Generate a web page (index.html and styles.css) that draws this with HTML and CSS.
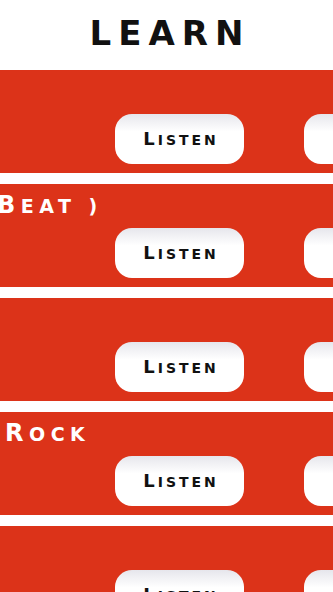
FILE: index.html
```html
<!DOCTYPE html>
<html lang="en">

<head>
    <meta charset="UTF-8">
    <meta name="viewport" content="width=device-width, initial-scale=1.0">
    <title>Learn</title>
    <link rel="stylesheet" href="styles.css">
</head>

<body>
    <header class="header">
        <h1 class="header-title">Learn</h1>
    </header>

    <div class="lessons">
        <div class="lesson">
            <div class="lesson-title"></div>
            <div class="lesson-actions">
                <button class="lesson-button"><span class="label">Listen</span></button>
                <button class="lesson-button"><span class="label">Learn</span></button>
            </div>
        </div>

        <div class="lesson">
            <div class="lesson-title lesson-title-clipped"><span class="label">Beat )</span></div>
            <div class="lesson-actions">
                <button class="lesson-button"><span class="label">Listen</span></button>
                <button class="lesson-button"><span class="label">Learn</span></button>
            </div>
        </div>

        <div class="lesson">
            <div class="lesson-title"></div>
            <div class="lesson-actions">
                <button class="lesson-button"><span class="label">Listen</span></button>
                <button class="lesson-button"><span class="label">Learn</span></button>
            </div>
        </div>

        <div class="lesson">
            <div class="lesson-title"><span class="label">Rock</span></div>
            <div class="lesson-actions">
                <button class="lesson-button"><span class="label">Listen</span></button>
                <button class="lesson-button"><span class="label">Learn</span></button>
            </div>
        </div>

        <div class="lesson">
            <div class="lesson-title"></div>
            <div class="lesson-actions">
                <button class="lesson-button"><span class="label">Listen</span></button>
                <button class="lesson-button"><span class="label">Learn</span></button>
            </div>
        </div>
    </div>
</body>

</html>
```

FILE: styles.css
```css
body {
    margin: 0;
    width: 333px;
    height: 592px;
    overflow: hidden;
    background-color: #ffffff;
    font-family: 'DejaVu Sans', 'Liberation Sans', sans-serif;
}

.header {
    height: 70px;
    box-sizing: border-box;
    padding-top: 13px;
    text-align: center;
}

.header-title {
    margin: 0;
    padding-left: 7px;
    font-size: 34px;
    line-height: 40px;
    font-weight: bold;
    text-transform: uppercase;
    letter-spacing: 7px;
    color: #111111;
}

/* small caps by hand: bigger first letter, the rest upper case */
.label {
    display: inline-block;
    text-transform: uppercase;
}

.lesson {
    height: 103px;
    margin-bottom: 11px;
    box-sizing: border-box;
    padding-top: 7px;
    background-color: #dc3319;
    overflow: hidden;
}

.lesson-title {
    height: 28px;
    padding-left: 5px;
    font-size: 19px;
    line-height: 28px;
    font-weight: bold;
    letter-spacing: 5.5px;
    color: #ffffff;
    white-space: nowrap;
}

.lesson-title .label::first-letter {
    font-size: 24px;
}

.lesson-title-clipped {
    margin-left: -8px;
}

.lesson-actions {
    display: flex;
    gap: 60px;
    margin-top: 9px;
    padding-left: 115px;
}

.lesson-button {
    flex-shrink: 0;
    width: 129px;
    height: 50px;
    padding: 0 0 0 3px;
    border: none;
    border-radius: 17px;
    background: linear-gradient(#e6e6ec, #ffffff 35%, #ffffff);
    font-family: 'DejaVu Sans', 'Liberation Sans', sans-serif;
    font-size: 14px;
    line-height: 20px;
    font-weight: bold;
    letter-spacing: 3px;
    color: #111111;
    white-space: nowrap;
    cursor: pointer;
}

.lesson-button .label::first-letter {
    font-size: 18px;
}
```
